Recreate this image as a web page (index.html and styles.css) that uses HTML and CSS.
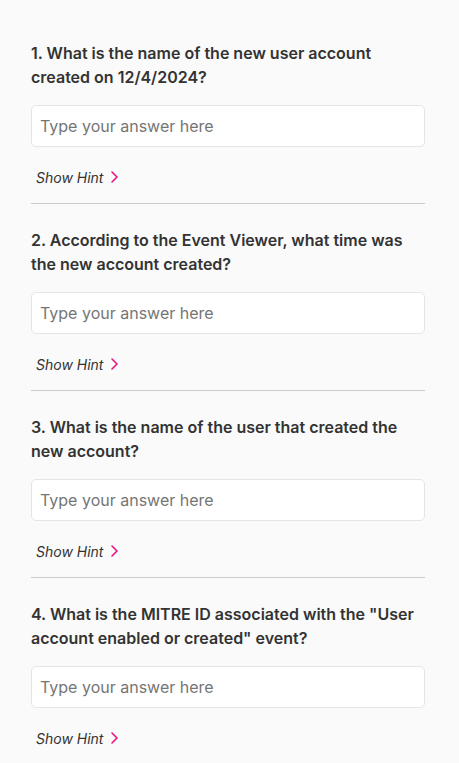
FILE: index.html
```html
<!DOCTYPE html>
<html>
<head>
<meta charset="utf-8">
<link rel="stylesheet" href="styles.css">
</head>
<body>
<main class="quiz">
  <section class="question">
    <h2 class="q-text">1. What is the name of the new user account created on 12/4/2024?</h2>
    <input class="answer" type="text" placeholder="Type your answer here">
    <button class="hint" type="button"><span>Show Hint</span><svg class="chev" width="9" height="14" viewBox="0 0 9 14"><path d="M2 2l5 5-5 5" fill="none" stroke="#e6147f" stroke-width="1.6" stroke-linecap="round" stroke-linejoin="round"/></svg></button>
  </section>
  <section class="question">
    <h2 class="q-text">2. According to the Event Viewer, what time was the new account created?</h2>
    <input class="answer" type="text" placeholder="Type your answer here">
    <button class="hint" type="button"><span>Show Hint</span><svg class="chev" width="9" height="14" viewBox="0 0 9 14"><path d="M2 2l5 5-5 5" fill="none" stroke="#e6147f" stroke-width="1.6" stroke-linecap="round" stroke-linejoin="round"/></svg></button>
  </section>
  <section class="question">
    <h2 class="q-text">3. What is the name of the user that created the new account?</h2>
    <input class="answer" type="text" placeholder="Type your answer here">
    <button class="hint" type="button"><span>Show Hint</span><svg class="chev" width="9" height="14" viewBox="0 0 9 14"><path d="M2 2l5 5-5 5" fill="none" stroke="#e6147f" stroke-width="1.6" stroke-linecap="round" stroke-linejoin="round"/></svg></button>
  </section>
  <section class="question">
    <h2 class="q-text">4. What is the MITRE ID associated with the "User account enabled or created" event?</h2>
    <input class="answer" type="text" placeholder="Type your answer here">
    <button class="hint" type="button"><span>Show Hint</span><svg class="chev" width="9" height="14" viewBox="0 0 9 14"><path d="M2 2l5 5-5 5" fill="none" stroke="#e6147f" stroke-width="1.6" stroke-linecap="round" stroke-linejoin="round"/></svg></button>
  </section>
</main>
</body>
</html>
```

FILE: styles.css
```css
html, body {
  margin: 0;
  padding: 0;
  background: #fafafa;
  font-family: Inter, "Noto Sans", sans-serif;
  color: #333333;
}
.quiz {
  width: 394px;
  padding: 41px 0 0 31px;
  display: flex;
  flex-direction: column;
}
.question {
  display: flex;
  flex-direction: column;
  border-bottom: 1px solid #cccccc;
  padding-bottom: 16px;
  margin-bottom: 24px;
}
.q-text {
  margin: 0 0 16px 0;
  font-size: 16px;
  line-height: 24px;
  font-weight: 600;
  color: #333333;
}
.answer {
  box-sizing: border-box;
  height: 42px;
  width: 100%;
  border: 1px solid #e5e5e5;
  border-radius: 5px;
  background: #ffffff;
  padding: 0 8px;
  font-family: Inter, "Noto Sans", sans-serif;
  font-size: 16px;
  color: #333333;
  margin: 0 0 20px 0;
  outline: none;
}
.answer::placeholder {
  color: #757575;
}
.hint {
  display: flex;
  align-items: center;
  gap: 7px;
  background: none;
  border: 0;
  padding: 0 0 0 5px;
  height: 20px;
  font-family: Inter, "Noto Sans", sans-serif;
  font-size: 14px;
  font-style: italic;
  color: #333333;
  cursor: pointer;
  align-self: flex-start;
}
.chev {
  display: block;
}
```
